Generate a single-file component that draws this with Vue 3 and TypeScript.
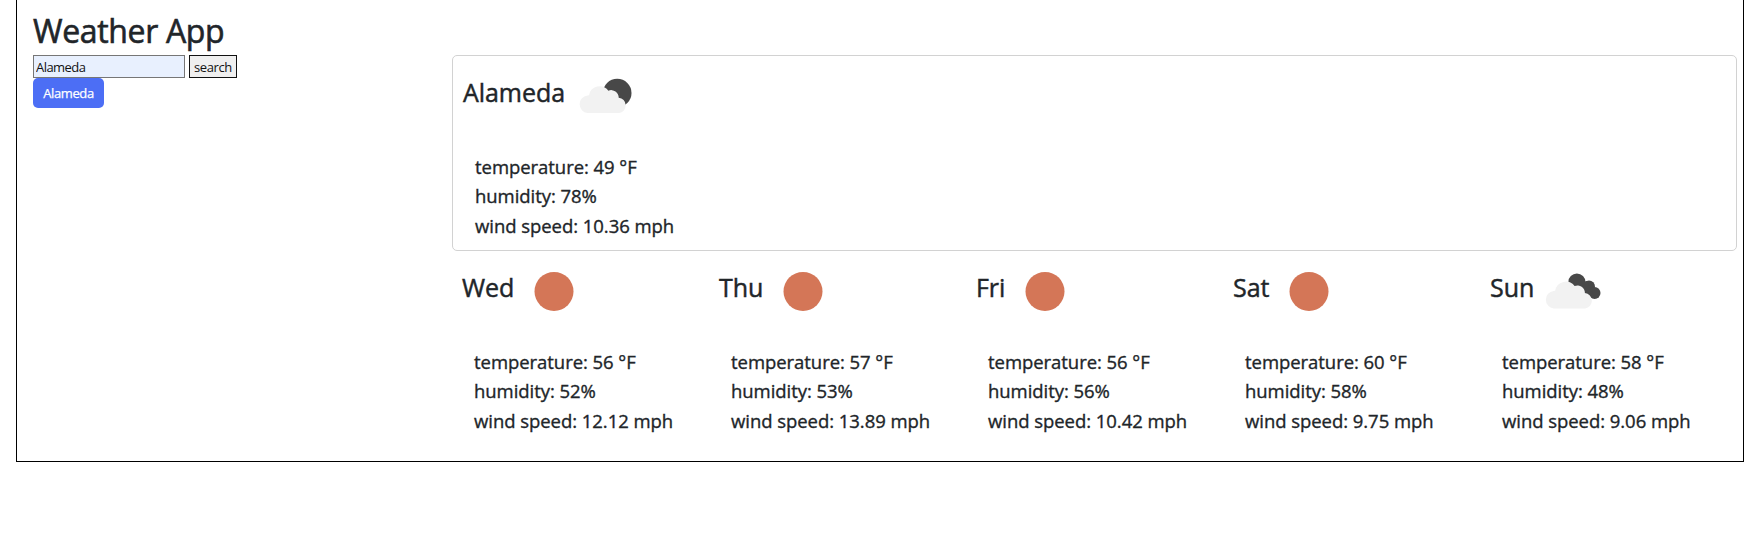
<script setup lang="ts">
import { ref } from 'vue'

type Icon = 'clear' | 'broken' | 'scattered'

interface Weather {
  name: string
  icon: Icon
  temperature: number
  humidity: number
  wind: string
}

const query = ref('Alameda')
const history = ref<string[]>(['Alameda'])

const reports: Weather[] = [
  { name: 'Alameda', icon: 'scattered', temperature: 49, humidity: 78, wind: '10.36' },
  { name: 'Wed', icon: 'clear', temperature: 56, humidity: 52, wind: '12.12' },
  { name: 'Thu', icon: 'clear', temperature: 57, humidity: 53, wind: '13.89' },
  { name: 'Fri', icon: 'clear', temperature: 56, humidity: 56, wind: '10.42' },
  { name: 'Sat', icon: 'clear', temperature: 60, humidity: 58, wind: '9.75' },
  { name: 'Sun', icon: 'broken', temperature: 58, humidity: 48, wind: '9.06' },
]
</script>

<template>
  <div class="container">
    <h1>Weather App</h1>
    <div class="layout">
      <aside>
        <form class="search" @submit.prevent>
          <input v-model="query" type="text" aria-label="City" />
          <button type="submit" class="search-btn">search</button>
        </form>
        <button v-for="city in history" :key="city" type="button" class="city-btn">{{ city }}</button>
      </aside>
      <main>
        <section
          v-for="(report, index) in reports"
          :key="report.name"
          class="report"
          :class="{ current: index === 0 }"
        >
          <header>
            <h2>{{ report.name }}</h2>
            <svg class="icon" viewBox="0 0 70 70" aria-hidden="true">
              <circle v-if="report.icon === 'clear'" cx="35" cy="35.4" r="19.5" fill="#d47657" />
              <template v-else>
                <circle v-if="report.icon === 'scattered'" cx="47.2" cy="32" r="14.3" fill="#484848" />
                <g v-else fill="#484848">
                  <circle cx="37.9" cy="26.2" r="8.6" />
                  <circle cx="50" cy="30.5" r="6" />
                  <circle cx="55.6" cy="37" r="5.9" />
                  <path d="M36 28L48 25L56 42L43 40Z" />
                </g>
                <path
                  :transform="report.icon === 'broken' ? 'translate(-2.8 .4)' : undefined"
                  d="M17.5 52A8.8 8.8 0 0 1 17.5 34.5Q18.2 34.3 19 34.4A10.8 10.8 0 0 1 38.4 29.7A7.4 7.4 0 0 1 48.7 36.7A7.7 7.7 0 0 1 49 52Z"
                  fill="#f2f2f2"
                />
              </template>
            </svg>
          </header>
          <ul>
            <li>temperature: {{ report.temperature }} °F</li>
            <li>humidity: {{ report.humidity }}%</li>
            <li>wind speed: {{ report.wind }} mph</li>
          </ul>
        </section>
      </main>
    </div>
  </div>
</template>

<style>
body {
  margin: 0;
  background: #fff;
}
</style>

<style scoped>
* {
  box-sizing: border-box;
}

.container {
  width: 1728px;
  height: 462px;
  margin-left: 16px;
  padding: 0 7px 0 16px;
  border: 1px solid #000;
  border-top: 0;
  color: #212529;
  font-family: 'Segoe UI', 'Open Sans', 'Noto Sans', sans-serif;
}

h1 {
  height: 55px;
  margin: 0;
  padding-top: 12px;
  font-size: 32px;
  font-weight: 500;
  line-height: 38px;
  letter-spacing: -0.35px;
  -webkit-text-stroke: 0.6px currentColor;
}

.layout {
  display: grid;
  grid-template-columns: 419px 1fr;
}

.search {
  display: flex;
  gap: 4px;
  height: 23px;
}

input {
  width: 152px;
  padding: 0 2px;
  border: 1px solid #767676;
  border-radius: 0;
  background: #e8f0fe;
  color: #111;
  font: 13px 'Segoe UI', 'Open Sans', sans-serif;
  letter-spacing: -0.55px;
}

.search-btn {
  width: 48px;
  padding: 0;
  border: 1px solid #111;
  border-radius: 0;
  background: #efefef;
  color: #111;
  font: 13px 'Segoe UI', 'Open Sans', sans-serif;
  letter-spacing: -0.4px;
}

.city-btn {
  display: block;
  width: 71px;
  height: 30px;
  padding: 0;
  border: 0;
  border-radius: 5px;
  background: #4c6ef5;
  color: #fff;
  font: 500 13px 'Segoe UI', 'Open Sans', sans-serif;
  letter-spacing: -0.4px;
  -webkit-text-stroke: 0.25px currentColor;
}

main {
  display: grid;
  grid-template-columns: repeat(5, 257px);
}

.report {
  height: 196px;
  padding: 5px 10px;
}

.current {
  grid-column: 1 / -1;
  border: 1px solid #d2d2d2;
  border-radius: 5px;
}

header {
  display: flex;
  height: 70px;
}

h2 {
  margin: 0;
  font-size: 25px;
  font-weight: 500;
  line-height: 63px;
  letter-spacing: -0.05px;
  -webkit-text-stroke: 0.45px currentColor;
}

.icon {
  flex: none;
  width: 70px;
  height: 70px;
  margin-left: 5px;
}

ul {
  margin: 0;
  padding: 20.5px 0 0 12px;
  list-style: none;
  font-size: 18.5px;
  font-weight: 500;
  line-height: 29.5px;
  letter-spacing: -0.05px;
  white-space: nowrap;
  -webkit-text-stroke: 0.35px currentColor;
}
</style>
